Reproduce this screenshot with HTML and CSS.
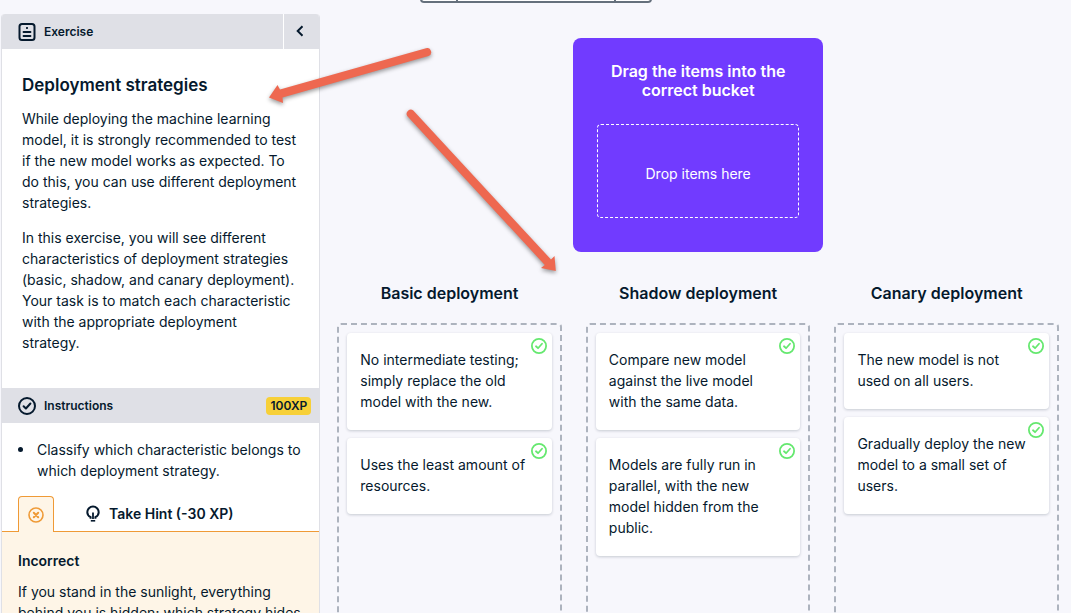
FILE: index.html
```html
<!DOCTYPE html>
<html lang="en">
<head>
  <meta charset="UTF-8" />
  <meta name="viewport" content="width=device-width, initial-scale=1" />
  <title>Deployment strategies</title>
  <link rel="stylesheet" href="styles.css">
</head>
<body>
  <svg class="symbols" aria-hidden="true">
    <symbol id="check" viewBox="0 0 18 18">
      <circle cx="9" cy="9" r="8" fill="none" stroke="currentColor" stroke-width="2" />
      <path d="M5.6 9.3l2.3 2.2 4.5-5" fill="none" stroke="currentColor" stroke-width="2" stroke-linecap="round" stroke-linejoin="round" />
    </symbol>
  </svg>

  <header class="topbar">
    <nav class="course-nav">
      <button class="nav-arrow" aria-label="Previous"></button>
      <button class="nav-outline" aria-label="Outline"></button>
      <button class="nav-arrow" aria-label="Next"></button>
    </nav>
  </header>

  <div class="layout">
    <aside class="sidebar">
      <div class="bar bar-top">
        <svg class="icon" viewBox="0 0 18 18" width="18" height="18" fill="none" stroke="currentColor" stroke-width="2" stroke-linecap="round">
          <rect x="1.5" y="1" width="15" height="16" rx="2.5" />
          <path d="M8.8 5h.4M5.5 9h7M5.5 13h7" stroke-width="1.8" />
        </svg>
        <h2 class="bar-title">Exercise</h2>
        <button class="collapse" aria-label="Collapse">
          <svg viewBox="0 0 8 12" width="8" height="12" fill="none" stroke="currentColor" stroke-width="2">
            <path d="M6.5 1.2L1.7 6l4.8 4.8" />
          </svg>
        </button>
      </div>
      <div class="exercise">
        <h1>Deployment strategies</h1>
        <p>While deploying the machine learning model, it is strongly recommended to test if the new model works as expected. To do this, you can use different deployment strategies.</p>
        <p>In this exercise, you will see different characteristics of deployment strategies (basic, shadow, and canary deployment). Your task is to match each characteristic with the appropriate deployment strategy.</p>
      </div>

      <div class="bar">
        <svg class="icon" width="18" height="18"><use href="#check" /></svg>
        <h2 class="bar-title">Instructions</h2>
        <span class="xp">100XP</span>
      </div>
      <ul class="instructions">
        <li>Classify which characteristic belongs to which deployment strategy.</li>
      </ul>

      <div class="tabs">
        <button class="tab-feedback" aria-label="Feedback">
          <svg viewBox="0 0 16 16" width="16" height="16" fill="none" stroke="currentColor" stroke-width="2" stroke-linecap="round">
            <circle cx="8" cy="8" r="7" stroke-width="1.6" />
            <path d="M5.8 5.8l4.4 4.4M10.2 5.8l-4.4 4.4" />
          </svg>
        </button>
        <button class="tab-hint">
          <svg viewBox="0 0 14 18" width="14" height="18" fill="none" stroke="currentColor" stroke-width="2">
            <path d="M4.6 13.8v-1.600C2.400 11 1.300 9.200 1.300 7.200a5.700 5.700 0 0 1 11.400 0c0 2-1.100 3.800-3.300 5v1.600" />
            <path d="M7 7.500v6.500" stroke-width="1.800" />
            <path d="M4.800 15.800h4.400" stroke-width="1.600" />
          </svg>
          Take Hint (-30 XP)
        </button>
      </div>
      <div class="feedback">
        <h3>Incorrect</h3>
        <p>If you stand in the sunlight, everything behind you is hidden; which strategy hides</p>
      </div>
    </aside>

    <main class="board">
      <section class="bank">
        <h2>Drag the items into the correct bucket</h2>
        <div class="drop">Drop items here</div>
      </section>

      <div class="buckets">
        <section class="bucket">
          <h2>Basic deployment</h2>
          <div class="bucket-items">
            <div class="card">No intermediate testing; simply replace the old model with the new.<svg class="ok"><use href="#check" /></svg></div>
            <div class="card">Uses the least amount of resources.<svg class="ok"><use href="#check" /></svg></div>
          </div>
        </section>
        <section class="bucket">
          <h2>Shadow deployment</h2>
          <div class="bucket-items">
            <div class="card">Compare new model against the live model with the same data.<svg class="ok"><use href="#check" /></svg></div>
            <div class="card">Models are fully run in parallel, with the new model hidden from the public.<svg class="ok"><use href="#check" /></svg></div>
          </div>
        </section>
        <section class="bucket">
          <h2>Canary deployment</h2>
          <div class="bucket-items">
            <div class="card">The new model is not used on all users.<svg class="ok"><use href="#check" /></svg></div>
            <div class="card">Gradually deploy the new model to a small set of users.<svg class="ok"><use href="#check" /></svg></div>
          </div>
        </section>
      </div>
    </main>
  </div>

  <!-- arrows drawn over the page -->
  <svg class="arrows" width="600" height="300" viewBox="0 0 600 300" aria-hidden="true">
    <path d="M426 48.200L280 89.500L277.500 85L269 97.500L283 103L282.500 97.500L428.500 56A4.100 4.100 0 0 0 426 48.200Z" />
    <path d="M413.300 110.500L551 259.500L554.500 256L555.800 271L541 268L544.800 265L407.200 116A4.200 4.200 0 0 1 413.300 110.500Z" />
  </svg>
</body>
</html>
```

FILE: styles.css
```css
* {
  box-sizing: border-box;
}
body {
  margin: 0;
  height: 100vh;
  overflow: hidden;
  display: flex;
  flex-direction: column;
  background: #f7f7fc;
  color: #05192d;
  font-family: Inter, "Open Sans", sans-serif;
  font-size: 14px;
  line-height: 21px;
}
h1, h2, h3, p {
  margin: 0;
}
h1, h2, h3 {
  font-weight: 600;
}
button {
  font: inherit;
  color: inherit;
  background: none;
  border: none;
  padding: 0;
  cursor: pointer;
}
.symbols {
  display: none;
}

/* course navigation, scrolled mostly out of view */
.topbar {
  display: flex;
  justify-content: center;
  align-items: flex-end;
  flex: none;
  height: 3px;
  margin-bottom: 11px;
}
.course-nav {
  display: flex;
  height: 36px;
  border: 2px solid #65707c;
  border-radius: 4px;
  background: #fff;
}
.nav-arrow {
  width: 34px;
}
.nav-outline {
  width: 160px;
  border: solid #65707c;
  border-width: 0 2px;
}

.layout {
  flex: 1;
  min-height: 0;
  display: flex;
}

/* sidebar */
.sidebar {
  width: calc(30% - 2px);
  margin: 0 1px;
  border: 1px solid #dfe0e6;
  border-width: 0 1px;
  border-radius: 4px 4px 0 0;
  background: #fff;
  overflow: hidden;
}
.bar {
  display: flex;
  align-items: center;
  height: 35px;
  padding: 0 8px 0 16px;
  background: #dfe0e6;
}
.bar-top {
  padding-right: 0;
}
.bar-title {
  flex: 1;
  margin-left: 8px;
  font-size: 12px;
}
.collapse {
  display: flex;
  align-items: center;
  justify-content: center;
  align-self: stretch;
  width: 36px;
  padding: 0 4px 2px 0;
  border-left: 1px solid #fff;
}
.xp {
  padding: 0 4px;
  border-radius: 4px;
  background: #f7d038;
  font-size: 12px;
  font-weight: 600;
  line-height: 18px;
}
.exercise {
  padding: 24px 22px 35px 20px;
}
.exercise h1 {
  font-size: 17px;
  line-height: 24px;
  margin-bottom: 11px;
}
.exercise p + p {
  margin-top: 14px;
}
.instructions {
  margin: 0;
  padding: 16px 16px 15px;
  list-style: none;
}
.instructions li {
  display: flex;
  gap: 14px;
}
.instructions li::before {
  content: "";
  flex: none;
  width: 5px;
  height: 5px;
  margin-top: 8px;
  border-radius: 50%;
  background: #05192d;
}
.tabs {
  display: flex;
  padding-left: 16px;
  border-bottom: 1px solid #ef9a36;
}
.tab-feedback {
  display: flex;
  align-items: center;
  justify-content: center;
  width: 36px;
  height: 36px;
  margin-bottom: -1px;
  border: 1px solid #ef9a36;
  border-bottom: none;
  border-radius: 4px 4px 0 0;
  background: #fef5e7;
  color: #ef9a36;
}
.tab-hint {
  display: flex;
  align-items: center;
  gap: 9px;
  margin-left: 32px;
  font-weight: 600;
}
.feedback {
  padding: 18px 16px;
  background: #fef5e7;
}
.feedback h3 {
  font-size: 14px;
  margin-bottom: 10px;
}

/* drag and drop board */
.board {
  flex: 1;
  min-width: 0;
  display: flex;
  flex-direction: column;
  padding: 24px 12px 0 16px;
}
.board h2 {
  font-size: 16px;
  line-height: 19px;
  text-align: center;
}
.bank {
  align-self: center;
  width: 250px;
  padding: 24px 24px 34px;
  border-radius: 8px;
  background: #713bff;
  color: #fff;
}
.drop {
  display: flex;
  align-items: center;
  justify-content: center;
  height: 94px;
  margin-top: 24px;
  padding-top: 5px;
  border: 1px dashed #fff;
  border-radius: 4px;
}
.buckets {
  flex: 1;
  display: grid;
  grid-template-columns: repeat(3, 1fr);
  gap: 24px;
  margin-top: 32px;
}
.bucket {
  display: flex;
  flex-direction: column;
  gap: 20px;
}
.bucket-items {
  flex: 1;
  display: flex;
  flex-direction: column;
  gap: 8px;
  margin-bottom: -16px;
  padding: 8px;
  border: 2px dashed #adb3be;
  border-radius: 4px;
}
.card {
  position: relative;
  padding: 16px 20px 18px 13px;
  border-radius: 4px;
  background: #fff;
  box-shadow: 0 1px 3px rgba(5, 25, 45, 0.2);
}
.ok {
  position: absolute;
  top: 5px;
  right: 5px;
  width: 16px;
  height: 16px;
  color: #65e86f;
}

.arrows {
  position: absolute;
  top: 0;
  left: 0;
  pointer-events: none;
  fill: #ee6850;
  filter: drop-shadow(0 2px 2px rgba(0, 0, 0, 0.4));
}
```
